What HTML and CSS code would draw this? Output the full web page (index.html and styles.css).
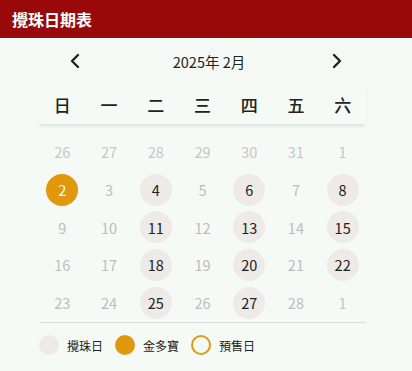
FILE: index.html
```html
<!DOCTYPE html>
<html lang="zh-Hant">
<head>
<meta charset="utf-8">
<link rel="stylesheet" href="styles.css">
</head>
<body>
<header class="topbar">攪珠日期表</header>
<main class="cal">
  <div class="nav">
    <button class="arrow" aria-label="prev"><svg width="14" height="16" viewBox="0 0 14 16"><path d="M10 2 L4 8 L10 14" fill="none" stroke="#222" stroke-width="2.4" stroke-linecap="round" stroke-linejoin="round"/></svg></button>
    <div class="month">2025年 2月</div>
    <button class="arrow" aria-label="next"><svg width="14" height="16" viewBox="0 0 14 16"><path d="M4 2 L10 8 L4 14" fill="none" stroke="#222" stroke-width="2.4" stroke-linecap="round" stroke-linejoin="round"/></svg></button>
  </div>
  <div class="week">
    <span>日</span><span>一</span><span>二</span><span>三</span><span>四</span><span>五</span><span>六</span>
  </div>
  <div class="days">
    <span class="d out">26</span><span class="d out">27</span><span class="d out">28</span><span class="d out">29</span><span class="d out">30</span><span class="d out">31</span><span class="d out">1</span>
    <span class="d gold">2</span><span class="d">3</span><span class="d draw">4</span><span class="d">5</span><span class="d draw">6</span><span class="d">7</span><span class="d draw">8</span>
    <span class="d">9</span><span class="d">10</span><span class="d draw">11</span><span class="d">12</span><span class="d draw">13</span><span class="d">14</span><span class="d draw">15</span>
    <span class="d">16</span><span class="d">17</span><span class="d draw">18</span><span class="d">19</span><span class="d draw">20</span><span class="d">21</span><span class="d draw">22</span>
    <span class="d">23</span><span class="d">24</span><span class="d draw">25</span><span class="d">26</span><span class="d draw">27</span><span class="d">28</span><span class="d out">1</span>
  </div>
  <div class="legend">
    <span class="dot dot-draw"></span><span class="lbl">攪珠日</span>
    <span class="dot dot-gold"></span><span class="lbl">金多寶</span>
    <span class="dot dot-pre"></span><span class="lbl">預售日</span>
  </div>
</main>
</body>
</html>
```
FILE: styles.css
```css
html, body {
  margin: 0;
  padding: 0;
  background: #f6faf7;
  font-family: "Noto Sans CJK TC", "Noto Sans", sans-serif;
  color: #222;
}
.topbar {
  height: 38px;
  background: #990909;
  color: #fff;
  font-weight: 700;
  font-size: 16px;
  line-height: 38px;
  padding-left: 12px;
}
.cal {
  width: 327px;
  margin-left: 39px;
}
.nav {
  height: 46px;
  display: flex;
  align-items: center;
  justify-content: space-between;
  padding: 0 22px 0 29px;
}
.arrow {
  background: none;
  border: 0;
  padding: 0;
  width: 14px;
  height: 16px;
  display: flex;
}
.month {
  font-size: 14.5px;
  color: #222;
  margin-left: 6px;
}
.week {
  display: grid;
  grid-template-columns: repeat(7, 1fr);
  height: 40px;
  align-items: center;
  text-align: center;
  font-size: 17px;
  font-weight: 500;
  color: #222;
  box-shadow: 0 3px 3px -1px rgba(0,0,0,0.10);
}
.days {
  display: grid;
  grid-template-columns: repeat(7, 1fr);
  grid-auto-rows: 37.7px;
  padding-top: 9px;
  padding-bottom: 1px;
  border-bottom: 1px solid #dcdedc;
  justify-items: center;
  align-items: center;
}
.d {
  width: 32px;
  height: 32px;
  border-radius: 50%;
  display: flex;
  align-items: center;
  justify-content: center;
  font-size: 14.5px;
  color: #bdbdbd;
}
.d.out { color: #c6c6c6; }
.d.draw { background: #eeeae7; color: #222; }
.d.gold { background: #e2980d; color: #fff; }
.legend {
  display: flex;
  align-items: center;
  height: 44px;
  font-size: 12px;
  color: #222;
}
.dot {
  width: 20px;
  height: 20px;
  border-radius: 50%;
  box-sizing: border-box;
  margin-right: 8px;
}
.dot-draw { background: #eeeae7; }
.dot-gold { background: #e2980d; }
.dot-pre { border: 2px solid #e2980d; }
.lbl { margin-right: 12px; }
```
